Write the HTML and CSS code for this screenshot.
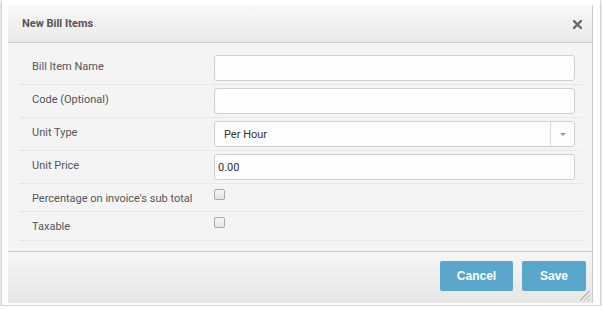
FILE: index.html
```html
<!DOCTYPE html>
<html>
<head>
  <meta charset="utf-8" />
  <title>New Bill Items</title>
  <link rel="stylesheet" href="styles.css">
</head>
<body>
  <div class="shot">
    <div class="modal">
      <div class="modal-header">
        <h3>New Bill Items</h3>
        <button class="close" type="button" aria-label="Close">
          <svg width="9" height="9" viewBox="0 0 9 9"><path d="M1 1 L8 8 M8 1 L1 8" stroke="#6b6b6b" stroke-width="2.4" stroke-linecap="square"/></svg>
        </button>
      </div>

      <form class="modal-body">
        <div class="row">
          <label for="itemName">Bill Item Name</label>
          <input type="text" id="itemName" />
        </div>
        <div class="row">
          <label for="itemCode">Code (Optional)</label>
          <input type="text" id="itemCode" />
        </div>
        <div class="row">
          <label>Unit Type</label>
          <div class="select">
            <span class="select-value">Per Hour</span>
            <span class="select-arrow"></span>
          </div>
        </div>
        <div class="row">
          <label for="unitPrice">Unit Price</label>
          <input type="text" id="unitPrice" value="0.00" />
        </div>
        <div class="row row-check">
          <label for="pct">Percentage on invoice's sub total</label>
          <input type="checkbox" id="pct" />
        </div>
        <div class="row row-check">
          <label for="taxable">Taxable</label>
          <input type="checkbox" id="taxable" />
        </div>
      </form>

      <div class="modal-footer">
        <button class="btn btn-cancel" type="button">Cancel</button>
        <button class="btn btn-save" type="button">Save</button>
        <span class="grip"></span>
      </div>
    </div>
  </div>
</body>
</html>
```

FILE: styles.css
```css
/* --- Page & frame --- */
:root {
  --body-bg: #f4f4f4;
  --label-color: #555;
  --text-color: #333;
  --input-border: #cfcfcf;
  --btn-color: #5ba7cc;
}
*, *::before, *::after {
  box-sizing: border-box;
}
body {
  margin: 0;
  background: #fff;
  font-family: Roboto, "Liberation Sans", Arial, sans-serif;
  font-size: 11px;
  color: var(--text-color);
}
.shot {
  width: 600px;
  height: 306px;
  margin-left: 1px;
  padding: 5px 7px 0 6px;
  border: 1px solid #d6d6d6;
  border-top: none;
  background: #fff;
  box-shadow: 0 2px 1px rgba(0, 0, 0, 0.55);
}

/* --- Modal --- */
.modal {
  height: 298px;
  display: flex;
  flex-direction: column;
  border-right: 1px solid #cdcdcd;
  background: var(--body-bg);
}
.modal-header {
  height: 38px;
  display: flex;
  align-items: center;
  justify-content: space-between;
  padding: 0 10px 0 14px;
  border-bottom: 1px solid #cfcfcf;
  background: linear-gradient(#f8f8f8, #e9e9e9);
}
.modal-header h3 {
  margin: 0;
  font-size: 11px;
  font-weight: bold;
  color: #555;
}
.close {
  display: flex;
  padding: 0;
  border: none;
  background: none;
  margin-top: 2px;
}

/* --- Form rows --- */
.modal-body {
  flex: 1;
  margin: 0;
  padding: 9px 10px 0 12px;
}
.row {
  display: flex;
  align-items: flex-start;
  padding: 3px 7px 3px 0;
  border-bottom: 1px dotted #dcdcdc;
}
.row label {
  width: 194px;
  flex: none;
  padding-left: 12px;
  padding-top: 4px;
  line-height: 16px;
  color: var(--label-color);
}
.row input[type="text"] {
  flex: 1;
  height: 26px;
  padding: 0 3px;
  font: inherit;
  color: var(--text-color);
  background: #fdfdfd;
  border: 1px solid var(--input-border);
  border-radius: 3px;
  outline: none;
}
.row-check {
  height: 28px;
}
.row-check + .row-check {
  height: 29px;
}
.row input[type="checkbox"] {
  appearance: none;
  margin: 2px 0 0;
  width: 11px;
  height: 11px;
  border: 1px solid #a9a9a9;
  border-radius: 2px;
  background: linear-gradient(#f6f6f6, #e4e4e4);
}

/* --- Select --- */
.select {
  flex: 1;
  height: 26px;
  display: flex;
  align-items: center;
  background: #fdfdfd;
  border: 1px solid var(--input-border);
  border-radius: 3px;
}
.select-value {
  flex: 1;
  padding-left: 9px;
}
.select-arrow {
  width: 24px;
  height: 100%;
  border-left: 1px solid #d6d6d6;
  display: flex;
  align-items: center;
  justify-content: center;
}
.select-arrow::after {
  content: "";
  border-left: 3px solid transparent;
  border-right: 3px solid transparent;
  border-top: 3px solid #999;
}

/* --- Footer --- */
.modal-footer {
  position: relative;
  height: 52px;
  display: flex;
  justify-content: flex-end;
  align-items: flex-start;
  gap: 9px;
  padding: 9px 6px 0 0;
  border-top: 1px solid #c9c9c9;
  background: linear-gradient(#f6f6f6, #e6e6e6);
}
.btn {
  height: 30px;
  padding: 0;
  border: none;
  border-radius: 2px;
  background: var(--btn-color);
  color: #fff;
  font-family: "Liberation Sans", Arial, sans-serif;
  font-size: 12px;
  font-weight: bold;
}
.btn-cancel {
  width: 73px;
}
.btn-save {
  width: 64px;
}
.grip {
  position: absolute;
  right: 2px;
  bottom: 2px;
  width: 10px;
  height: 10px;
  background: linear-gradient(135deg,
    transparent 45%, #bbb 45%, #bbb 52%, transparent 52%,
    transparent 66%, #bbb 66%, #bbb 73%, transparent 73%,
    transparent 86%, #bbb 86%, #bbb 93%, transparent 93%);
}
```
